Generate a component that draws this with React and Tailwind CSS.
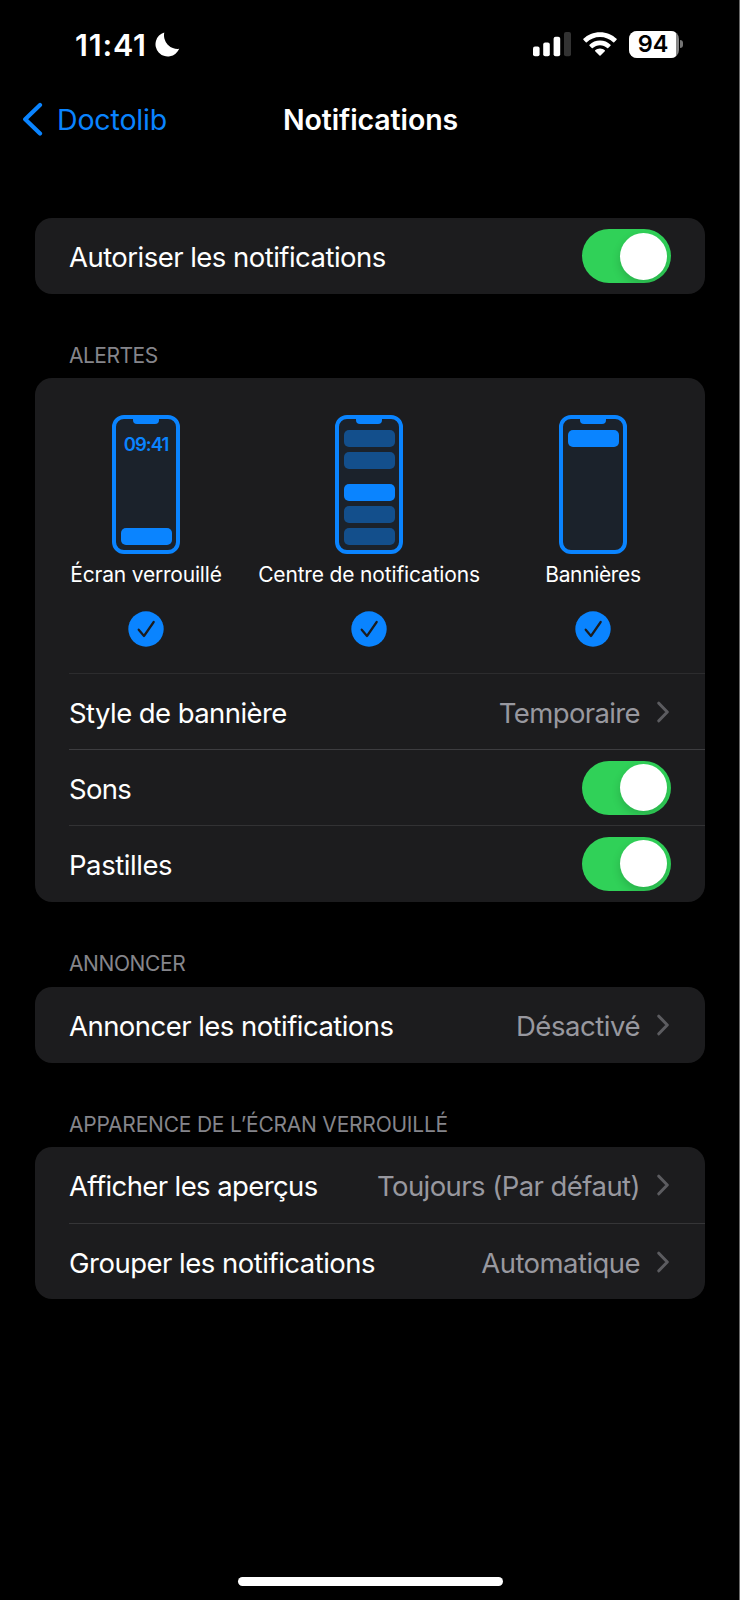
function StatusBar() {
  return (
    <div className="flex h-[88px] shrink-0 items-center justify-between pr-[56px] pl-[75px]">
      <div className="flex items-center">
        <span className="w-[80px] pt-[2px] text-[30.5px] leading-none font-semibold tracking-[0.8px] whitespace-nowrap">
          11:41
        </span>
        <svg width="25" height="25" viewBox="0 0 25 25" fill="#fff" className="mt-px">
          <path d="M9.3 .4A12.3 12.3 0 1 0 24.2 16.8A13.6 13.6 0 0 1 9.3 .4Z" />
        </svg>
      </div>
      <div className="flex items-center">
        <svg width="38" height="25" viewBox="0 0 38 25" fill="#fff">
          <rect x="0" y="14.5" width="6.6" height="9.8" rx="2" />
          <rect x="10.2" y="10.5" width="6.6" height="13.8" rx="2" />
          <rect x="20.6" y="4.8" width="6.6" height="19.5" rx="2" />
          <rect x="31" y="0" width="7" height="24.3" rx="2" fill="#323232" />
        </svg>
        <svg width="34" height="25" viewBox="0 0 34 25" fill="#fff" className="mr-[12px] ml-[12px]">
          <path d="M17 .2C10.500 .2 4.600 2.700 .400 6.800C.100 7.100 .100 7.500 .400 7.800L2.800 10.200C3.100 10.500 3.500 10.500 3.800 10.200C7.300 6.900 11.900 4.900 17 4.900C22.100 4.900 26.700 6.900 30.200 10.200C30.500 10.500 30.900 10.500 31.200 10.200L33.600 7.800C33.900 7.500 33.900 7.100 33.600 6.800C29.400 2.700 23.500 .2 17 .2Z" />
          <path d="M17 8.500C12.900 8.500 9.200 10.100 6.500 12.700C6.200 13 6.200 13.400 6.500 13.700L8.800 16C9.100 16.300 9.500 16.300 9.800 16C11.700 14.300 14.200 13.200 17 13.200C19.800 13.200 22.300 14.300 24.200 16C24.500 16.300 24.900 16.300 25.200 16L27.500 13.700C27.800 13.400 27.800 13 27.500 12.700C24.800 10.100 21.100 8.500 17 8.500Z" />
          <path d="M17 16.500C15.100 16.500 13.500 17.200 12.200 18.300C11.900 18.600 11.900 19 12.200 19.300L16.500 23.600C16.800 23.900 17.200 23.900 17.500 23.600L21.800 19.300C22.100 19 22.100 18.600 21.800 18.300C20.500 17.200 18.900 16.500 17 16.500Z" />
        </svg>
        <div className="flex h-[27px] w-[50px] overflow-hidden rounded-[8px] bg-[#858585]">
          <div className="flex w-[47px] items-center justify-center rounded-r-[3px] bg-white pl-px text-[23.5px] leading-none font-semibold text-black">
            94
          </div>
        </div>
        <div className="ml-[1px] h-[8px] w-[3px] rounded-r-full bg-[#757575]" />
      </div>
    </div>
  );
}

function NavBar() {
  return (
    <div className="relative flex h-[62px] shrink-0 items-center justify-center">
      <div className="absolute inset-y-0 left-[22px] flex items-center text-[#0a84ff]">
        <svg width="22" height="34" viewBox="0 0 22 34" fill="none" stroke="currentColor" strokeWidth="4.2" strokeLinecap="round" strokeLinejoin="round">
          <path d="M18 2.900L3.200 17.200L18 31.500" />
        </svg>
        <span className="ml-[13px] pt-[2px] text-[28.5px] leading-none tracking-[-0.15px]">Doctolib</span>
      </div>
      <h1 className="pt-[2px] pl-[2px] text-[28.5px] leading-none font-semibold tracking-[-0.1px]">Notifications</h1>
    </div>
  );
}

function Toggle() {
  return (
    <div className="flex h-[54px] w-[89px] items-center justify-end overflow-hidden rounded-full bg-[#30d158] pr-[4px]">
      <div className="size-[47px] rounded-full bg-white shadow-[0_4px_10px_rgba(0,0,0,0.16)]" />
    </div>
  );
}

function Chevron() {
  return (
    <svg width="13" height="22" viewBox="0 0 13 22" fill="none" stroke="#5c5c60" strokeWidth="3" strokeLinecap="round" strokeLinejoin="round" className="ml-[17px]">
      <path d="M1.800 2.200L10.300 11L1.800 19.800" />
    </svg>
  );
}

function Row({ label, track, border = "", children, value, valueTrack = "" }) {
  return (
    <div className="h-[76px] pl-[34px]">
      <div className={`flex h-full items-center justify-between pr-[35px] ${border}`}>
        <span className={`pt-[4px] text-[27.5px] leading-none whitespace-nowrap ${track}`}>{label}</span>
        {value ? (
          <div className="flex items-center">
            <span className={`pt-[4px] text-[27.5px] leading-none whitespace-nowrap text-[#98989f] ${valueTrack}`}>{value}</span>
            <Chevron />
          </div>
        ) : (
          <div className="-mr-px">{children}</div>
        )}
      </div>
    </div>
  );
}

function Header({ children, track }) {
  return (
    <h2 className={`flex h-[84px] items-end pb-[8px] pl-[34px] text-[21px] leading-[28px] text-[#85858b] ${track}`}>
      {children}
    </h2>
  );
}

function Card({ children }) {
  return <section className="overflow-hidden rounded-[17px] bg-[#1c1c1e]">{children}</section>;
}

function Phone({ children }) {
  return (
    <div className="relative flex h-[139px] w-[68px] flex-col items-center rounded-[12px] border-4 border-[#0a84ff] bg-[#1b222b] pt-[11px] pb-[5px]">
      <div className="absolute top-0 left-1/2 h-[5px] w-[26px] -translate-x-1/2 rounded-b-[4px] bg-[#0a84ff]" />
      {children}
    </div>
  );
}

function Bar({ className = "bg-[#0a84ff]" }) {
  return <div className={`h-[17px] w-[51px] shrink-0 rounded-[5px] ${className}`} />;
}

function AlertOption({ label, track, children }) {
  return (
    <div className="flex flex-col items-center">
      <Phone>{children}</Phone>
      <span className={`mt-[7px] text-[21px] leading-[28px] whitespace-nowrap ${track}`}>{label}</span>
      <svg width="36" height="36" viewBox="0 0 36 36" className="mt-[22px]">
        <circle cx="18" cy="18" r="17.700" fill="#0a84ff" />
        <path d="M10.700 18.700L16 25L25.700 11" fill="none" stroke="#1c1c1e" strokeWidth="2.200" strokeLinecap="round" strokeLinejoin="round" />
      </svg>
    </div>
  );
}

export default function App() {
  return (
    <div className="flex h-[1600px] w-full flex-col border-r border-[#6a6a6a] bg-black font-['Inter',sans-serif] text-white">
      <StatusBar />
      <NavBar />
      <main className="mt-[68px] pr-[34px] pl-[35px]">
        <Card>
          <Row label="Autoriser les notifications" track="tracking-[-0.53px]">
            <Toggle />
          </Row>
        </Card>

        <Header track="tracking-[-0.5px]">ALERTES</Header>
        <Card>
          <div className="grid h-[295px] grid-cols-[222px_224px_224px] pt-[37px]">
            <AlertOption label="Écran verrouillé" track="tracking-[-0.2px]">
              <span className="mt-[5px] mb-auto text-[18.5px] leading-none font-semibold tracking-[-1px] text-[#0a84ff]">09:41</span>
              <Bar />
            </AlertOption>
            <AlertOption label="Centre de notifications" track="tracking-[-0.16px]">
              <div className="flex flex-col gap-[5px]">
                <Bar className="bg-[#134f8c]" />
                <Bar className="bg-[#134f8c]" />
                <Bar className="mt-[10px] bg-[#0a84ff]" />
                <Bar className="bg-[#134f8c]" />
                <Bar className="bg-[#134f8c]" />
              </div>
            </AlertOption>
            <AlertOption label="Bannières" track="tracking-[-0.34px]">
              <Bar />
            </AlertOption>
          </div>
          <Row label="Style de bannière" track="tracking-[-0.57px]" border="border-t border-[#2c2c2e]" value="Temporaire" valueTrack="tracking-[-0.63px]" />
          <Row label="Sons" track="tracking-[-0.72px]" border="border-t border-[#3d3d40]">
            <Toggle />
          </Row>
          <Row label="Pastilles" track="tracking-[-0.44px]" border="border-t border-[#323234]">
            <Toggle />
          </Row>
          <div className="h-px" />
        </Card>

        <Header track="tracking-[-0.4px]">ANNONCER</Header>
        <div className="h-px" />
        <Card>
          <Row label="Annoncer les notifications" track="tracking-[-0.54px]" value="Désactivé" valueTrack="tracking-[-0.46px]" />
        </Card>

        <Header track="tracking-[-0.22px]">APPARENCE DE L’ÉCRAN VERROUILLÉ</Header>
        <Card>
          <Row label="Afficher les aperçus" track="tracking-[-0.6px]" value="Toujours (Par défaut)" valueTrack="tracking-[-0.56px]" />
          <Row label="Grouper les notifications" track="tracking-[-0.5px]" border="border-t border-[#353537]" value="Automatique" valueTrack="tracking-[-0.55px]" />
        </Card>
      </main>
      <div className="mt-auto mb-[14px] ml-[238px] h-[9px] w-[265px] rounded-full bg-white" />
    </div>
  );
}
